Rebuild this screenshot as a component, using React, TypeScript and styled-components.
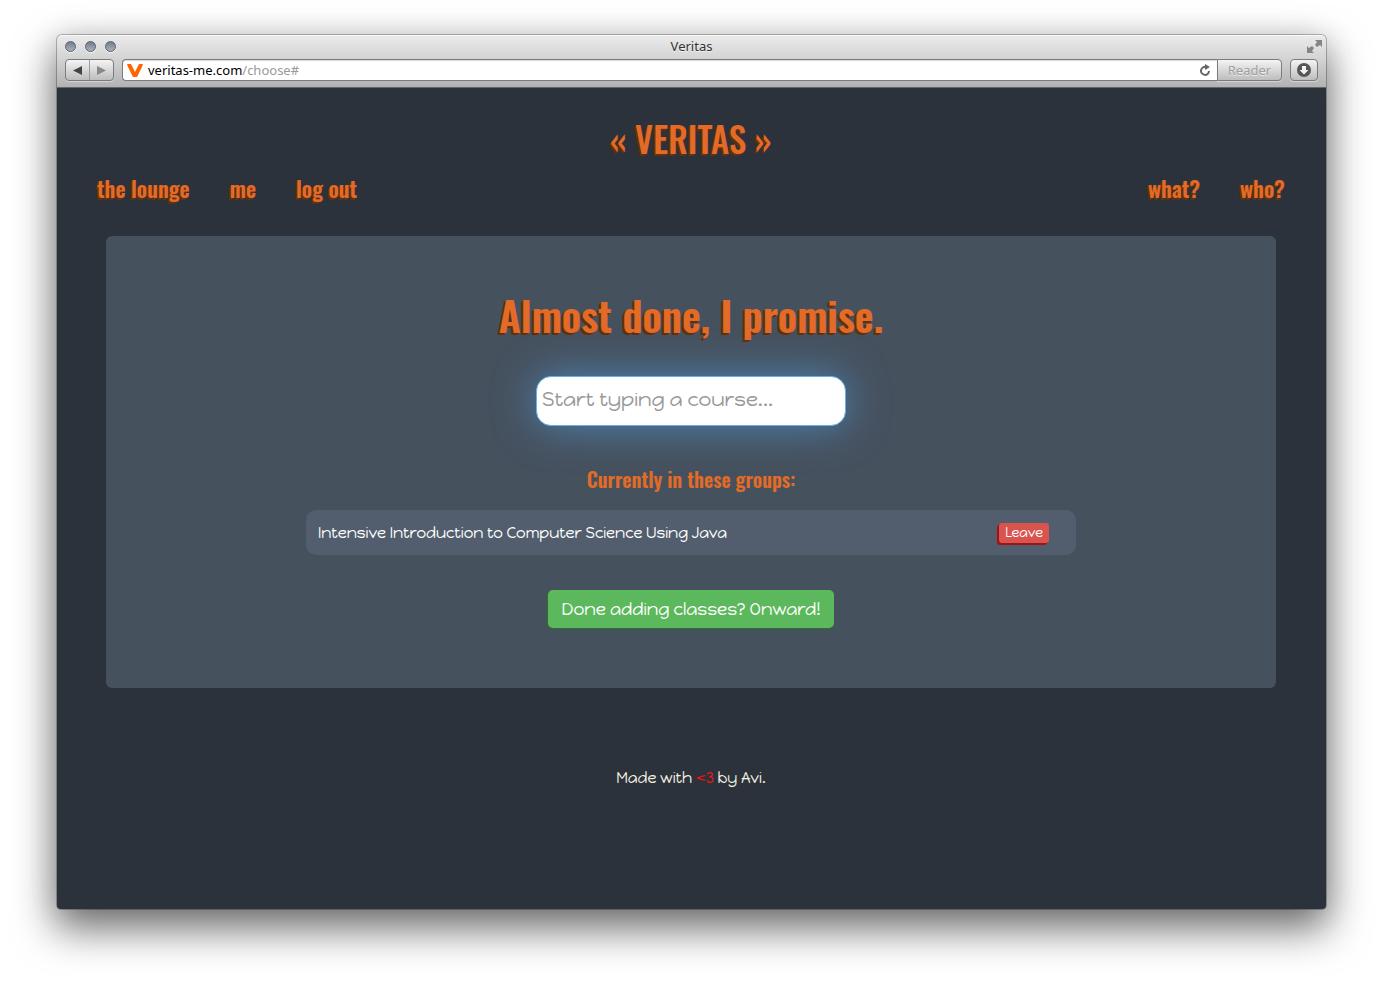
import React from "react";
import styled, { createGlobalStyle } from "styled-components";

const display = `"Oswald", "Liberation Sans Narrow", "Roboto Condensed", "Open Sans Condensed", "DejaVu Sans Condensed", sans-serif`;
const body = `"Happy Monkey", "Noto Sans", sans-serif`;
const chrome = `"Lucida Grande", "Noto Sans", sans-serif`;

const GlobalStyle = createGlobalStyle`
  * { box-sizing: border-box; }
  body { margin: 0; background: #fff; font-family: ${body}; }
  button, input { font-family: inherit; margin: 0; }
`;

const Desktop = styled.div`
  min-height: 100vh;
  padding: 35px 57px 79px;
  display: flex;
  overflow: hidden;
`;

const Window = styled.div`
  flex: 1;
  min-width: 0;
  display: flex;
  flex-direction: column;
  border-radius: 5px 5px 4px 4px;
  background: #2b323b;
  box-shadow: 0 0 0 1px rgba(0, 0, 0, 0.25), 0 18px 40px 2px rgba(0, 0, 0, 0.56),
    0 0 30px rgba(0, 0, 0, 0.1);
`;

const Chrome = styled.header`
  height: 53px;
  border-radius: 5px 5px 0 0;
  border-bottom: 1px solid #666;
  background: linear-gradient(#ebebeb, #d4d4d4 45%, #b2b2b2);
  box-shadow: inset 0 1px 0 #f8f8f8;
  font-family: ${chrome};
`;

const TitleBar = styled.div`
  height: 22px;
  padding: 0 4px;
  display: grid;
  grid-template-columns: 1fr auto 1fr;
  align-items: center;
  font-size: 13px;
  color: #333;
  text-shadow: 0 1px 0 rgba(255, 255, 255, 0.6);
`;

const Lights = styled.div`
  display: flex;
  gap: 9px;
  padding-left: 4px;
`;

const Light = styled.button`
  width: 11px;
  height: 11px;
  padding: 0;
  border: 1px solid #59616b;
  border-radius: 50%;
  background: linear-gradient(#727d89, #a8b2bd);
  box-shadow: 0 1px 0 rgba(255, 255, 255, 0.6);
`;

const Expand = styled.button`
  justify-self: end;
  display: flex;
  padding: 0;
  border: 0;
  background: none;
`;

const Toolbar = styled.div`
  display: flex;
  height: 26px;
  padding: 2px 8px;
`;

const chromeButton = `
  height: 22px;
  border: 1px solid #7b7b7b;
  background: linear-gradient(#f4f4f4, #bdbdbd);
  box-shadow: 0 1px 0 rgba(255, 255, 255, 0.4);
  padding: 0;
  display: flex;
  align-items: center;
  justify-content: center;
`;

const NavPair = styled.div`
  ${chromeButton}
  width: 49px;
  border-radius: 4px;
  margin-right: 8px;
`;

const Arrow = styled.button`
  flex: 1;
  height: 20px;
  padding: 0;
  border: 0;
  background: none;
  display: flex;
  align-items: center;
  justify-content: center;
  & + & { border-left: 1px solid #9c9c9c; }
`;

const Address = styled.div`
  flex: 1;
  height: 22px;
  display: flex;
  align-items: center;
  gap: 5px;
  padding: 0 6px 0 4px;
  border: 1px solid #7b7b7b;
  border-right: 0;
  border-radius: 4px 0 0 4px;
  background: #fff;
  box-shadow: inset 0 1px 1px rgba(0, 0, 0, 0.15);
  font-size: 13px;
  line-height: 18px;
  color: #000;
`;

const Url = styled.div`
  flex: 1;
  span { color: #999; }
`;

const Reload = styled.button`
  display: flex;
  padding: 0;
  border: 0;
  background: none;
`;

const Reader = styled.button`
  ${chromeButton}
  width: 65px;
  border-radius: 0 4px 4px 0;
  color: #a0a0a0;
  font-size: 13px;
  text-shadow: 0 1px 0 rgba(255, 255, 255, 0.6);
`;

const Downloads = styled.button`
  ${chromeButton}
  width: 28px;
  margin-left: 8px;
  border-radius: 4px;
`;

const Page = styled.div`
  flex: 1;
  padding: 26px 41px 40px 40px;
  display: flex;
  flex-direction: column;
`;

const Logo = styled.a`
  align-self: center;
  font: 500 35px/48px ${display};
  color: #e36b25;
  text-decoration: none;
  text-shadow: -1px 1px 0 #60300f, -2px 2px 0 #60300f;
`;

const Nav = styled.nav`
  display: flex;
  gap: 40px;
  margin-top: 8px;
`;

const NavLink = styled.a<{ $push?: boolean }>`
  margin-left: ${(p) => (p.$push ? "auto" : "0")};
  font: 600 22px/36px ${display};
  color: #e36b25;
  text-decoration: none;
  text-shadow: -1px 1px 0 #60300f, -2px 2px 0 #60300f;
`;

const Panel = styled.main`
  width: 100%;
  max-width: 1170px;
  margin: 30px auto 0;
  padding: 44px 20px 60px;
  border-radius: 6px;
  background: #46515e;
  display: flex;
  flex-direction: column;
  align-items: center;
`;

const Heading = styled.h1`
  margin: 0;
  font: 600 41px/70px ${display};
  color: #e36b25;
  text-shadow: -1px 1px 0 #60300f, -2px 2px 0 #60300f;
`;

const Search = styled.input`
  width: 310px;
  height: 50px;
  margin-top: 26px;
  padding: 0 5px 4px;
  border: 1px solid #66afe9;
  border-radius: 15px;
  outline: 0;
  background: #fff;
  color: #555;
  font-size: 20px;
  box-shadow: 0 0 40px rgba(82, 168, 236, 0.6);
  &::placeholder { color: #999; opacity: 1; }
`;

const SubHeading = styled.h2`
  margin: 39px 0 0;
  font: 600 20px/28px ${display};
  color: #e36b25;
`;

const Groups = styled.ul`
  width: 100%;
  max-width: 770px;
  margin: 17px 0 0;
  padding: 0;
  list-style: none;
`;

const Group = styled.li`
  height: 45px;
  padding: 0 27px 0 12px;
  border-radius: 10px;
  background: #525e6d;
  display: flex;
  align-items: center;
  justify-content: space-between;
  color: #fff;
  font-size: 15px;
`;

const Leave = styled.button`
  height: 20px;
  padding: 0 6px;
  border: 0;
  border-radius: 3px;
  background: #d9534f;
  box-shadow: -1px 1px 0 #9f1414, -2px 2px 0 #9f1414;
  color: #fff;
  font-size: 13px;
  line-height: 20px;
`;

const Done = styled.button`
  height: 38px;
  margin-top: 35px;
  padding: 0 14px;
  border: 0;
  border-radius: 5px;
  background: #5cb85c;
  box-shadow: -1px 1px 0 #2d6f2d;
  color: #fff;
  font-size: 17px;
`;

const Footer = styled.footer`
  margin-top: 78px;
  text-align: center;
  font-size: 15px;
  line-height: 24px;
  color: #f5f0e0;
`;

const Heart = styled.span`
  color: #f01414;
`;

export default function App() {
  return (
    <>
      <GlobalStyle />
      <Desktop>
        <Window>
          <Chrome>
            <TitleBar>
              <Lights>
                <Light aria-label="Close" />
                <Light aria-label="Minimize" />
                <Light aria-label="Zoom" />
              </Lights>
              <span>Veritas</span>
              <Expand aria-label="Full screen">
                <svg width="15" height="15" viewBox="0 0 15 15" fill="#858585">
                  <path d="M8 1h7v7l-2-2-3 2-2-2 2-3zM0 7l2 2 3-2 2 2-2 3 2 2H0z" />
                </svg>
              </Expand>
            </TitleBar>
            <Toolbar>
              <NavPair>
                <Arrow aria-label="Back">
                  <svg width="9" height="9" viewBox="0 0 9 9"><path d="M9 0v9L0 4.5z" fill="#444" /></svg>
                </Arrow>
                <Arrow aria-label="Forward">
                  <svg width="9" height="9" viewBox="0 0 9 9"><path d="M0 0v9l9-4.5z" fill="#888" /></svg>
                </Arrow>
              </NavPair>
              <Address>
                <svg width="16" height="13" viewBox="0 0 16 13">
                  <path d="M0 0h4l4 8 4-8h4l-1 3-5 10H6L1 3z" fill="#f60" />
                </svg>
                <Url>veritas-me.com<span>/choose#</span></Url>
                <Reload aria-label="Reload">
                  <svg width="12" height="12" viewBox="0 0 12 12">
                    <path d="M7 3A4 4 0 1 0 10 7" fill="none" stroke="#666" strokeWidth="2" />
                    <path d="M6 0l5 3-5 3z" fill="#666" />
                  </svg>
                </Reload>
              </Address>
              <Reader>Reader</Reader>
              <Downloads aria-label="Downloads">
                <svg width="14" height="14" viewBox="0 0 14 14">
                  <circle cx="7" cy="7" r="7" fill="#555" />
                  <path d="M5 3h4v4h2.500L7 11.500 2.500 7H5z" fill="#f2f2f2" />
                </svg>
              </Downloads>
            </Toolbar>
          </Chrome>
          <Page>
            <Logo href="#">« VERITAS »</Logo>
            <Nav>
              <NavLink href="#">the lounge</NavLink>
              <NavLink href="#">me</NavLink>
              <NavLink href="#">log out</NavLink>
              <NavLink href="#" $push>what?</NavLink>
              <NavLink href="#">who?</NavLink>
            </Nav>
            <Panel>
              <Heading>Almost done, I promise.</Heading>
              <Search type="text" aria-label="Course" placeholder="Start typing a course..." />
              <SubHeading>Currently in these groups:</SubHeading>
              <Groups>
                <Group>
                  <span>Intensive Introduction to Computer Science Using Java</span>
                  <Leave>Leave</Leave>
                </Group>
              </Groups>
              <Done>Done adding classes? Onward!</Done>
            </Panel>
            <Footer>
              Made with <Heart>&lt;3</Heart> by Avi.
            </Footer>
          </Page>
        </Window>
      </Desktop>
    </>
  );
}
